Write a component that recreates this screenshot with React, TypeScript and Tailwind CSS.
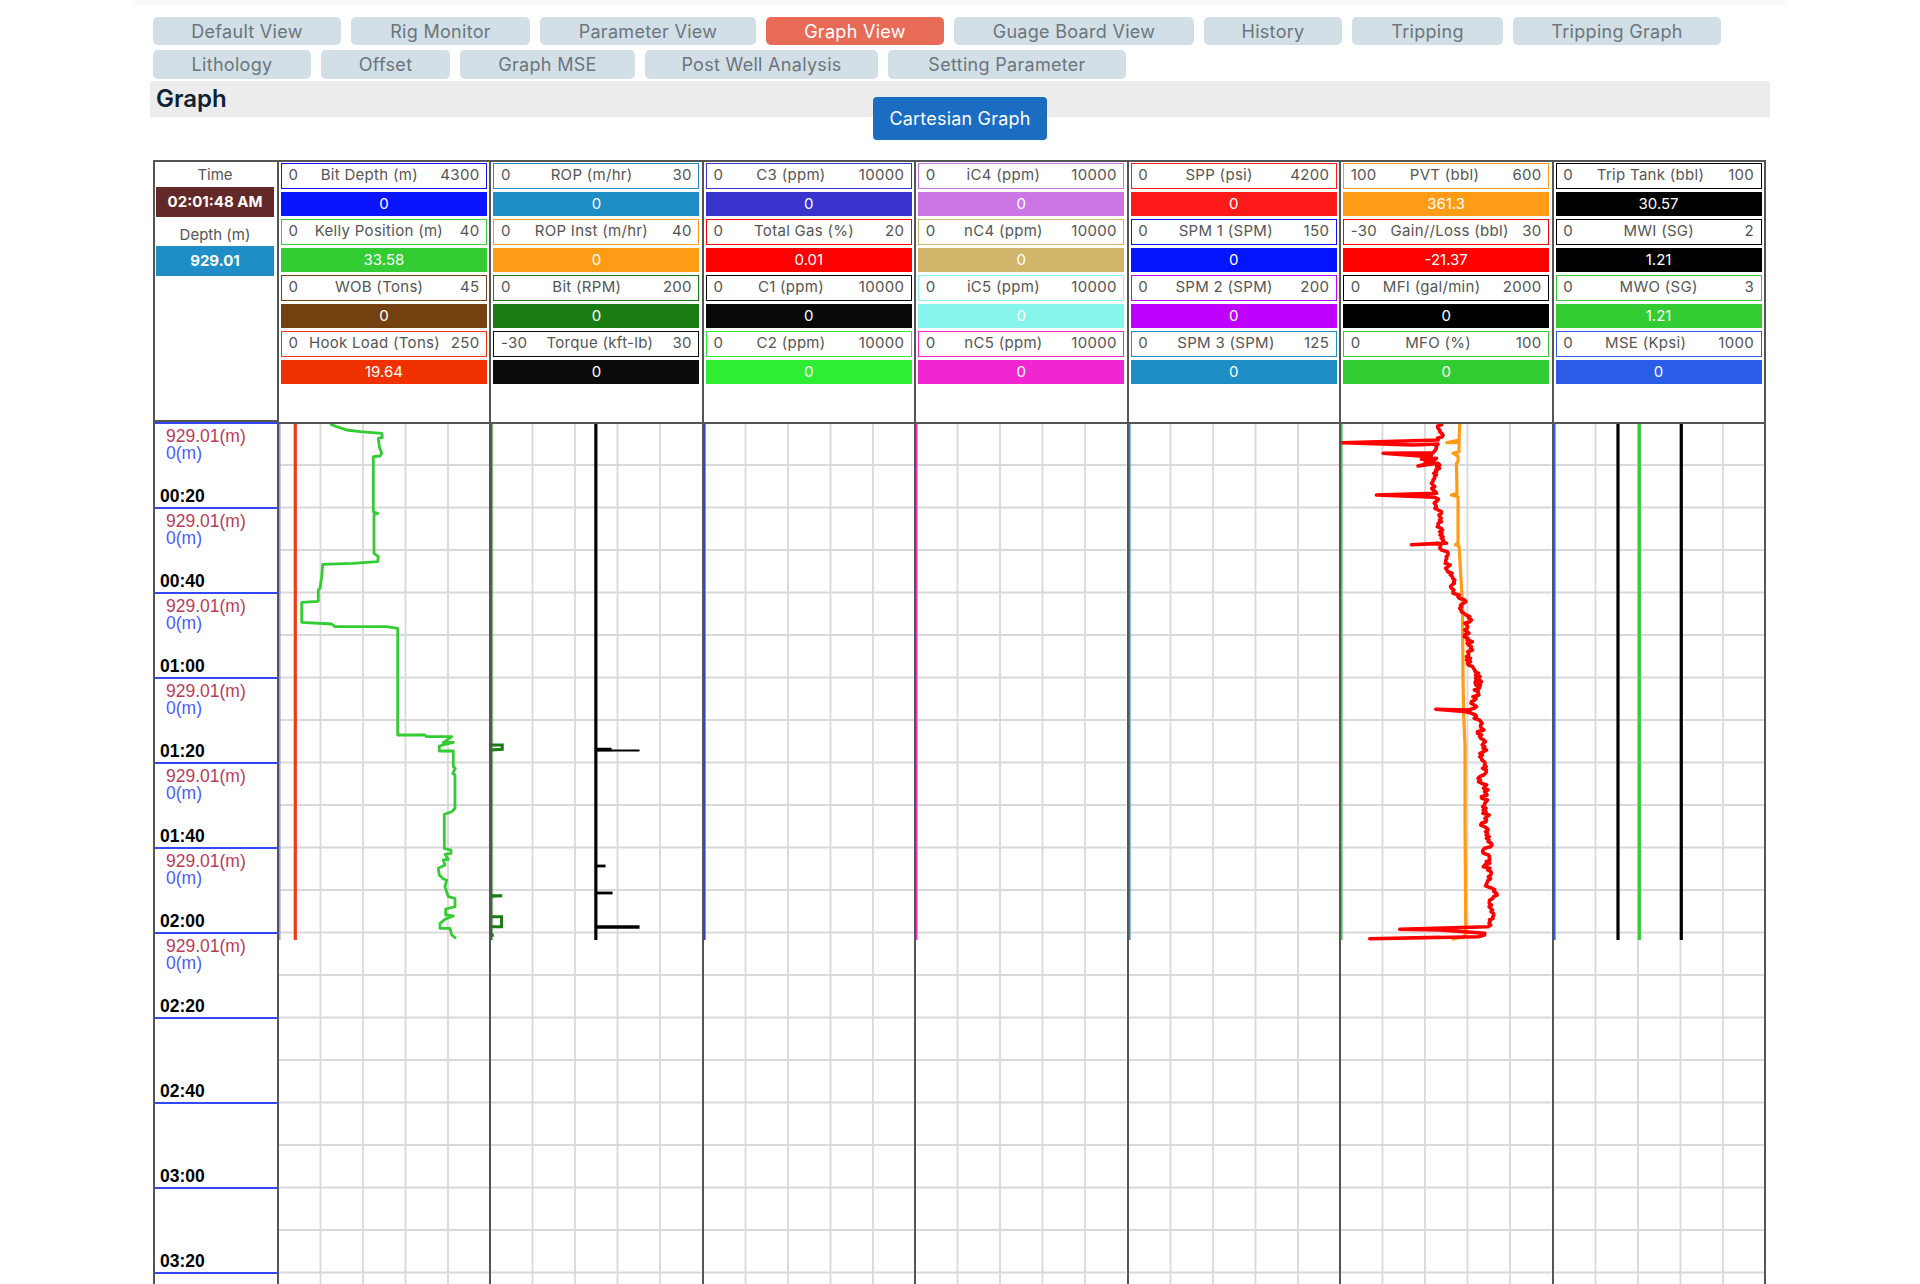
import React from "react";

type Pt = [number, number];

const tabsRow1 = [
  { t: "Default View", w: "w-[188px]" },
  { t: "Rig Monitor", w: "w-[179px]" },
  { t: "Parameter View", w: "w-[216px]" },
  { t: "Graph View", w: "w-[178px]", active: true },
  { t: "Guage Board View", w: "w-[240px]" },
  { t: "History", w: "w-[138px]" },
  { t: "Tripping", w: "w-[151px]" },
  { t: "Tripping Graph", w: "w-[208px]" },
];
const tabsRow2 = [
  { t: "Lithology", w: "w-[158px]" },
  { t: "Offset", w: "w-[129px]" },
  { t: "Graph MSE", w: "w-[175px]" },
  { t: "Post Well Analysis", w: "w-[233px]" },
  { t: "Setting Parameter", w: "w-[238px]" },
];

type Item = { min: string; label: string; max: string; value: string; b: string; bg: string };
const cols: Item[][] = [
  [
    { min: "0", label: "Bit Depth (m)", max: "4300", value: "0", b: "border-[#0a14ff]", bg: "bg-[#0a14ff]" },
    { min: "0", label: "Kelly Position (m)", max: "40", value: "33.58", b: "border-[#33cc33]", bg: "bg-[#33cc33]" },
    { min: "0", label: "WOB (Tons)", max: "45", value: "0", b: "border-[#744010]", bg: "bg-[#744010]" },
    { min: "0", label: "Hook Load (Tons)", max: "250", value: "19.64", b: "border-[#ef3100]", bg: "bg-[#ef3100]" },
  ],
  [
    { min: "0", label: "ROP (m/hr)", max: "30", value: "0", b: "border-[#208ec6]", bg: "bg-[#208ec6]" },
    { min: "0", label: "ROP Inst (m/hr)", max: "40", value: "0", b: "border-[#ff9b14]", bg: "bg-[#ff9b14]" },
    { min: "0", label: "Bit (RPM)", max: "200", value: "0", b: "border-[#1a7d12]", bg: "bg-[#1a7d12]" },
    { min: "-30", label: "Torque (kft-lb)", max: "30", value: "0", b: "border-[#0c0c0c]", bg: "bg-[#0c0c0c]" },
  ],
  [
    { min: "0", label: "C3 (ppm)", max: "10000", value: "0", b: "border-[#3733cc]", bg: "bg-[#3733cc]" },
    { min: "0", label: "Total Gas (%)", max: "20", value: "0.01", b: "border-[#ff0000]", bg: "bg-[#ff0000]" },
    { min: "0", label: "C1 (ppm)", max: "10000", value: "0", b: "border-[#080808]", bg: "bg-[#080808]" },
    { min: "0", label: "C2 (ppm)", max: "10000", value: "0", b: "border-[#2eee33]", bg: "bg-[#2eee33]" },
  ],
  [
    { min: "0", label: "iC4 (ppm)", max: "10000", value: "0", b: "border-[#cc76e6]", bg: "bg-[#cc76e6]" },
    { min: "0", label: "nC4 (ppm)", max: "10000", value: "0", b: "border-[#d1b56a]", bg: "bg-[#d1b56a]" },
    { min: "0", label: "iC5 (ppm)", max: "10000", value: "0", b: "border-[#87f4ec]", bg: "bg-[#87f4ec]" },
    { min: "0", label: "nC5 (ppm)", max: "10000", value: "0", b: "border-[#f026d0]", bg: "bg-[#f026d0]" },
  ],
  [
    { min: "0", label: "SPP (psi)", max: "4200", value: "0", b: "border-[#ff1a1a]", bg: "bg-[#ff1a1a]" },
    { min: "0", label: "SPM 1 (SPM)", max: "150", value: "0", b: "border-[#0414ff]", bg: "bg-[#0414ff]" },
    { min: "0", label: "SPM 2 (SPM)", max: "200", value: "0", b: "border-[#c000ff]", bg: "bg-[#c000ff]" },
    { min: "0", label: "SPM 3 (SPM)", max: "125", value: "0", b: "border-[#208ec6]", bg: "bg-[#208ec6]" },
  ],
  [
    { min: "100", label: "PVT (bbl)", max: "600", value: "361.3", b: "border-[#ff9b14]", bg: "bg-[#ff9b14]" },
    { min: "-30", label: "Gain//Loss (bbl)", max: "30", value: "-21.37", b: "border-[#ff0000]", bg: "bg-[#ff0000]" },
    { min: "0", label: "MFI (gal/min)", max: "2000", value: "0", b: "border-[#000000]", bg: "bg-[#000000]" },
    { min: "0", label: "MFO (%)", max: "100", value: "0", b: "border-[#33cc33]", bg: "bg-[#33cc33]" },
  ],
  [
    { min: "0", label: "Trip Tank (bbl)", max: "100", value: "30.57", b: "border-[#000000]", bg: "bg-[#000000]" },
    { min: "0", label: "MWI (SG)", max: "2", value: "1.21", b: "border-[#000000]", bg: "bg-[#000000]" },
    { min: "0", label: "MWO (SG)", max: "3", value: "1.21", b: "border-[#33cc33]", bg: "bg-[#33cc33]" },
    { min: "0", label: "MSE (Kpsi)", max: "1000", value: "0", b: "border-[#2b5ce8]", bg: "bg-[#2b5ce8]" },
  ],
];

const edgeColors = ["#8f9cff", "#1a7d12", "#3733cc", "#f026d0", "#208ec6", "#33cc33", "#2b5ce8"];

const rows = [
  { t: "00:20", d: true },
  { t: "00:40", d: true },
  { t: "01:00", d: true },
  { t: "01:20", d: true },
  { t: "01:40", d: true },
  { t: "02:00", d: true },
  { t: "02:20", d: true },
  { t: "02:40", d: false },
  { t: "03:00", d: false },
  { t: "03:20", d: false },
  { t: "", d: false },
];

const toPage = (ox: number, oy: number, pts: number[][]): Pt[] =>
  pts.map(([x, y]) => [ox + x / 3, oy + y / 3]);
const path = (pts: Pt[]) => pts.map((p, i) => (i ? "L" : "M") + p[0].toFixed(1) + " " + p[1].toFixed(1)).join("");

const kelly: Pt[] = [
  ...toPage(150, 420, [
    [540, 12], [560, 20], [590, 30], [630, 35], [695, 40], [697, 52], [685, 55], [688, 80], [695, 100], [690, 108],
    [670, 110], [670, 275], [683, 280], [672, 283], [672, 400], [685, 410], [683, 425], [608, 430], [518, 433],
    [515, 470], [510, 505], [505, 510], [505, 544], [455, 547], [455, 607], [545, 612], [555, 620], [710, 620],
    [743, 625], [743, 945],
  ]),
  ...toPage(280, 700, [
    [435, 105], [440, 110], [515, 110], [490, 128], [520, 127], [478, 138], [478, 153], [520, 153], [520, 200],
    [526, 205], [518, 220], [525, 225], [525, 325], [515, 335], [493, 343], [493, 445], [513, 450], [513, 460],
    [495, 463], [505, 478], [490, 480], [495, 495], [475, 505], [478, 525], [490, 537], [500, 540], [495, 560],
    [505, 590], [525, 595], [525, 620], [497, 627], [497, 645], [520, 648], [495, 658], [480, 670], [480, 685],
    [510, 685], [515, 705], [528, 715],
  ]),
];

const bitGreen = toPage(280, 700, [
  [632, 135], [668, 135], [668, 148], [632, 150], [632, 587], [668, 587], [632, 589], [632, 650], [666, 650],
  [666, 680], [632, 680], [632, 705], [642, 705], [632, 708], [632, 718],
]);

const noisy = (pts: Pt[], amp: number): Pt[] => {
  const out: Pt[] = [];
  let seed = 1;
  const rnd = () => {
    seed += 1;
    const v = Math.sin(seed * 12.9898) * 43758.5453;
    return v - Math.floor(v) - 0.5;
  };
  for (let i = 0; i < pts.length - 1; i++) {
    const [x0, y0] = pts[i];
    const [x1, y1] = pts[i + 1];
    out.push([x0, y0]);
    if (Math.abs(x1 - x0) > 25) continue;
    const n = Math.floor(Math.abs(y1 - y0) / 1.6);
    for (let s = 1; s < n; s++) {
      const t = s / n;
      out.push([x0 + (x1 - x0) * t + rnd() * amp * 2, y0 + (y1 - y0) * t]);
    }
  }
  out.push(pts[pts.length - 1]);
  return out;
};

const gainRed = noisy(
  [
    ...toPage(1340, 420, [
      [310, 12], [295, 25], [310, 45], [295, 60], [220, 62], [8, 68], [220, 75], [295, 72], [290, 85], [280, 98],
      [130, 100], [240, 108], [275, 105], [245, 118], [290, 115], [235, 138], [295, 130], [280, 180], [290, 220],
      [110, 225], [285, 232], [290, 260], [300, 290], [295, 310], [310, 350], [320, 370], [215, 374], [295, 370],
      [305, 390], [325, 400], [325, 440], [345, 480], [340, 515], [375, 540], [365, 575], [390, 590], [375, 630],
      [395, 680], [380, 710], [405, 750], [420, 800],
    ]),
    ...toPage(1340, 680, [
      [410, 0], [415, 40], [395, 65], [410, 80], [385, 90], [288, 88], [380, 95], [410, 110], [425, 145], [420, 170],
      [435, 200], [425, 235], [440, 270], [415, 295], [435, 320], [435, 370], [440, 420], [425, 430], [445, 450],
      [440, 475], [455, 490], [430, 510], [450, 540], [435, 555], [455, 580], [440, 612], [470, 640], [450, 660],
      [460, 715], [445, 740], [180, 748], [300, 750], [435, 760], [415, 770], [90, 776], [300, 772],
    ]),
  ],
  3.4
);

const pvt: Pt[] = [
  ...toPage(1340, 420, [
    [360, 12], [358, 60], [320, 68], [350, 68], [358, 62], [358, 95], [340, 100], [355, 108], [355, 125], [350, 130],
    [352, 220], [335, 225], [355, 230], [355, 370], [347, 374], [358, 378], [365, 500], [368, 550], [370, 780],
  ]),
  ...toPage(1340, 680, [[372, 110], [376, 200], [376, 430], [378, 740], [375, 770], [335, 778]]),
];

const PlotBody = ({ index }: { index: number }) => {
  const colX = 277 + 212.45 * index;
  const verts = [1, 2, 3, 4].map((k) => colX + 1 + 42.5 * k);
  const horiz = Array.from({ length: 20 }, (_, k) => 422.5 + 42.5 * (k + 1));
  const L = (x: number, c: string, w = 3.2) => <path d={`M${x} 424L${x} 940`} stroke={c} strokeWidth={w} fill="none" />;
  const S = (y: number, x0: number, x1: number, w = 2) => (
    <path d={`M${x0} ${y}L${x1} ${y}`} stroke="#000" strokeWidth={w} fill="none" />
  );
  return (
    <svg className="block w-[210.45px] h-[860px]" viewBox="0 0 210.45 860" preserveAspectRatio="none">
      <g transform={`translate(${-(colX + 2)} -424)`}>
        {verts.map((x) => (
          <path key={x} d={`M${x} 424L${x} 1284`} stroke="#d9d9d9" strokeWidth={1.8} fill="none" />
        ))}
        {horiz.map((y) => (
          <path key={y} d={`M${colX} ${y}L${colX + 212.45} ${y}`} stroke="#d9d9d9" strokeWidth={1.8} fill="none" />
        ))}
        {L(colX + 2.8, edgeColors[index], 1.5)}
        {index === 0 && (
          <>
            {L(295.3, "#f03a10")}
            <path d={path(kelly)} stroke="#33cc33" strokeWidth={2.8} fill="none" strokeLinejoin="round" />
          </>
        )}
        {index === 1 && (
          <>
            {L(596.3, "#000")}
            {S(749.5, 596, 612, 3.5)}
            {S(750.5, 596, 640)}
            {S(866, 596, 606, 2.8)}
            {S(893, 596, 613, 2.8)}
            {S(927, 596, 640, 3.6)}
            <path d={path(bitGreen)} stroke="#1a7d12" strokeWidth={3} fill="none" />
          </>
        )}
        {index === 5 && (
          <>
            <path d={path(pvt)} stroke="#ff9b14" strokeWidth={3.2} fill="none" strokeLinejoin="round" />
            <path d={path(gainRed)} stroke="#ff0000" strokeWidth={3.6} fill="none" strokeLinejoin="round" />
          </>
        )}
        {index === 6 && (
          <>
            {L(1617.7, "#000")}
            {L(1639, "#33cc33")}
            {L(1681, "#000")}
          </>
        )}
      </g>
    </svg>
  );
};

const Tab = ({ t, w, active }: { t: string; w: string; active?: boolean }) => (
  <div
    className={`${w} h-full rounded-[5px] flex items-center justify-center text-[18px] tracking-[0.3px] ${
      active ? "bg-[#e76b57] text-white" : "bg-[#d2dfe6] text-[#6c757d]"
    }`}
  >
    {t}
  </div>
);

export default function App() {
  return (
    <div className="w-[1920px] h-[1284px] overflow-hidden bg-white font-['Inter',sans-serif]">
      <div className="ml-[135px] w-[1650px]">
        <div className="h-[5px] bg-[#f8f9fa]" />
        <div className="pl-[18px] pt-[12px] flex flex-col gap-[5px]">
          <div className="flex gap-[10px] h-[28px]">
            {tabsRow1.map((x) => (
              <Tab key={x.t} {...x} />
            ))}
          </div>
          <div className="flex gap-[10px] h-[29px]">
            {tabsRow2.map((x) => (
              <Tab key={x.t} {...x} />
            ))}
          </div>
        </div>
        <div className="mt-[2px] ml-[15px] w-[1620px] h-[36px] bg-[#ececec] px-[6px] flex items-start">
          <span className="text-[24px] leading-[36px] font-semibold text-[#0f2233]">Graph</span>
        </div>
        <div className="-mt-[20px] flex justify-center relative">
          <div className="w-[174px] h-[43px] rounded-[4px] bg-[#1a6dc1] text-white text-[18px] tracking-[0.2px] flex items-center justify-center">
            Cartesian Graph
          </div>
        </div>
        <div className="mt-[20px] ml-[18px] w-[1613.15px] border-t-2 border-r-2 border-[#555555] flex">
          <div className="w-[124px] shrink-0 border-l-2 border-[#555555] flex flex-col">
            <div className="h-[260px] border-b-2 border-[#555555] flex flex-col pl-[1px] pr-[3px] text-center">
              <div className="h-[25px] flex items-center justify-center pt-[2px] text-[15px] text-[#555555]">Time</div>
              <div className="h-[30px] bg-[#632828] text-white font-bold text-[15px] flex items-center justify-center">
                02:01:48 AM
              </div>
              <div className="h-[29px] flex items-end justify-center text-[15px] text-[#555555]">Depth (m)</div>
              <div className="h-[30px] bg-[#208ec6] text-white font-bold text-[15px] flex items-center justify-center">
                929.01
              </div>
            </div>
            <div className="border-t-2 border-[#3347f5] font-['Liberation_Sans',sans-serif]">
              {rows.map((r, i) => (
                <div key={i} className="h-[85px] border-b-2 border-[#3347f5] flex flex-col pt-[3.5px] pb-[1.5px]">
                  {r.d && (
                    <>
                      <div className="pl-[11px] text-[17.5px] leading-[17px] text-[#b83c5e]">929.01(m)</div>
                      <div className="pl-[11px] text-[17.5px] leading-[17px] text-[#4a5cff]">0(m)</div>
                    </>
                  )}
                  <div className="mt-auto pl-[5px] text-[17.5px] leading-[20px] font-bold text-black">{r.t}</div>
                </div>
              ))}
            </div>
          </div>
          {cols.map((items, i) => (
            <div key={i} className="w-[212.45px] shrink-0 border-l-2 border-[#555555] flex flex-col">
              <div className="h-[262px] border-b-2 border-[#555555] pl-[2px] pr-[2.5px] pt-px flex flex-col gap-[3px]">
                {items.map((it) => (
                  <React.Fragment key={it.label}>
                    <div className={`h-[26px] border-[1.5px] ${it.b} pl-[6.5px] pr-[6.5px] pb-[1px] flex items-center justify-between text-[15px] tracking-[0.3px] text-[#555555]`}>
                      <span>{it.min}</span>
                      <span>{it.label}</span>
                      <span>{it.max}</span>
                    </div>
                    <div className={`h-[24px] ${it.bg} text-white text-[15px] flex items-center justify-center`}>{it.value}</div>
                  </React.Fragment>
                ))}
              </div>
              <PlotBody index={i} />
            </div>
          ))}
        </div>
      </div>
    </div>
  );
}
